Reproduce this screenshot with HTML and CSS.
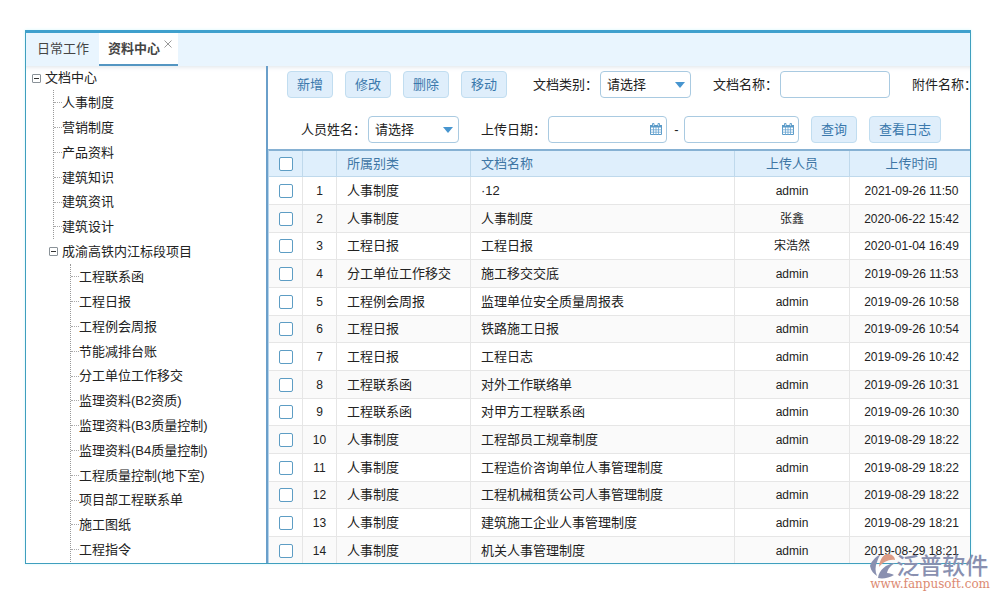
FILE: index.html
```html
<!DOCTYPE html>
<html lang="zh-CN">
<head>
<meta charset="utf-8">
<title>资料中心</title>
<link rel="stylesheet" href="styles.css">
</head>
<body>
<svg class="defs" aria-hidden="true">
  <symbol id="calendar" viewBox="0 0 12 12">
    <path d="M.5 2.5h11v9H.5z" fill="#fff" stroke="#5b9bc8"/>
    <path d="M0 2h12v2.500H0z" fill="#5b9bc8"/>
    <path d="M3.5 4v8M6 4v8M8.500 4v8M0 6.800h12M0 9.200h12" stroke="#6ba6d2" fill="none" stroke-width=".8"/>
    <path d="M2.500 3V.5h1.500V3M8 3V.5h1.500V3" stroke="#5b9bc8" fill="#fff" stroke-width=".9"/>
  </symbol>
</svg>
<main class="panel">
  <nav class="tabs">
    <a class="tab" href="#daily">日常工作</a>
    <div class="tab tab-active"><a href="#docs">资料中心</a><button class="close" type="button" aria-label="关闭"><svg viewBox="0 0 8 8"><path d="M.5.5l7 7M7.5.5l-7 7"/></svg></button></div>
  </nav>
  <div class="body">
    <aside class="sidebar">
      <div class="node root"><button class="toggle" type="button" aria-label="折叠"></button><a href="#n">文档中心</a></div>
      <ul class="tree">
        <li class="node"><a href="#n">人事制度</a></li>
        <li class="node"><a href="#n">营销制度</a></li>
        <li class="node"><a href="#n">产品资料</a></li>
        <li class="node"><a href="#n">建筑知识</a></li>
        <li class="node"><a href="#n">建筑资讯</a></li>
        <li class="node"><a href="#n">建筑设计</a></li>
      </ul>
      <div class="node branch"><button class="toggle" type="button" aria-label="折叠"></button><a href="#n">成渝高铁内江标段项目</a></div>
      <ul class="tree tree-inner">
        <li class="node"><a href="#n">工程联系函</a></li>
        <li class="node"><a href="#n">工程日报</a></li>
        <li class="node"><a href="#n">工程例会周报</a></li>
        <li class="node"><a href="#n">节能减排台账</a></li>
        <li class="node"><a href="#n">分工单位工作移交</a></li>
        <li class="node"><a href="#n">监理资料(B2资质)</a></li>
        <li class="node"><a href="#n">监理资料(B3质量控制)</a></li>
        <li class="node"><a href="#n">监理资料(B4质量控制)</a></li>
        <li class="node"><a href="#n">工程质量控制(地下室)</a></li>
        <li class="node"><a href="#n">项目部工程联系单</a></li>
        <li class="node"><a href="#n">施工图纸</a></li>
        <li class="node"><a href="#n">工程指令</a></li>
      </ul>
    </aside>
    <section class="content">
      <form class="filters">
        <div class="line">
          <div class="actions">
            <button class="btn" type="button">新增</button>
            <button class="btn" type="button">修改</button>
            <button class="btn" type="button">删除</button>
            <button class="btn" type="button">移动</button>
          </div>
          <div class="field"><label for="type">文档类别：</label><span class="pick"><select id="type"><option>请选择</option></select></span></div>
          <div class="field"><label for="name">文档名称：</label><input class="box" id="name" type="text"></div>
          <div class="field"><label for="file">附件名称：</label><input class="box" id="file" type="text"></div>
        </div>
        <div class="line line-second">
          <div class="field"><label for="person">人员姓名：</label><span class="pick"><select id="person"><option>请选择</option></select></span></div>
          <div class="field"><label for="from">上传日期：</label><span class="date"><input class="box" id="from" type="text"><svg><use href="#calendar"/></svg></span><span class="dash">-</span><span class="date"><input class="box" type="text" aria-label="结束日期"><svg><use href="#calendar"/></svg></span></div>
          <div class="actions search"><button class="btn" type="button">查询</button><button class="btn" type="button">查看日志</button></div>
        </div>
      </form>
      <table class="grid">
        <colgroup><col class="c-check"><col class="c-num"><col class="c-cat"><col class="c-name"><col class="c-user"><col class="c-time"></colgroup>
        <thead><tr><th><input type="checkbox" aria-label="全选"></th><th></th><th class="left">所属别类</th><th class="left">文档名称</th><th>上传人员</th><th>上传时间</th></tr></thead>
        <tbody>
          <tr><td><input type="checkbox" aria-label="选择 1"></td><td class="num">1</td><td class="left">人事制度</td><td class="left">·12</td><td class="user">admin</td><td class="num">2021-09-26 11:50</td></tr>
          <tr><td><input type="checkbox" aria-label="选择 2"></td><td class="num">2</td><td class="left">人事制度</td><td class="left">人事制度</td><td class="user">张鑫</td><td class="num">2020-06-22 15:42</td></tr>
          <tr><td><input type="checkbox" aria-label="选择 3"></td><td class="num">3</td><td class="left">工程日报</td><td class="left">工程日报</td><td class="user">宋浩然</td><td class="num">2020-01-04 16:49</td></tr>
          <tr><td><input type="checkbox" aria-label="选择 4"></td><td class="num">4</td><td class="left">分工单位工作移交</td><td class="left">施工移交交底</td><td class="user">admin</td><td class="num">2019-09-26 11:53</td></tr>
          <tr><td><input type="checkbox" aria-label="选择 5"></td><td class="num">5</td><td class="left">工程例会周报</td><td class="left">监理单位安全质量周报表</td><td class="user">admin</td><td class="num">2019-09-26 10:58</td></tr>
          <tr><td><input type="checkbox" aria-label="选择 6"></td><td class="num">6</td><td class="left">工程日报</td><td class="left">铁路施工日报</td><td class="user">admin</td><td class="num">2019-09-26 10:54</td></tr>
          <tr><td><input type="checkbox" aria-label="选择 7"></td><td class="num">7</td><td class="left">工程日报</td><td class="left">工程日志</td><td class="user">admin</td><td class="num">2019-09-26 10:42</td></tr>
          <tr><td><input type="checkbox" aria-label="选择 8"></td><td class="num">8</td><td class="left">工程联系函</td><td class="left">对外工作联络单</td><td class="user">admin</td><td class="num">2019-09-26 10:31</td></tr>
          <tr><td><input type="checkbox" aria-label="选择 9"></td><td class="num">9</td><td class="left">工程联系函</td><td class="left">对甲方工程联系函</td><td class="user">admin</td><td class="num">2019-09-26 10:30</td></tr>
          <tr><td><input type="checkbox" aria-label="选择 10"></td><td class="num">10</td><td class="left">人事制度</td><td class="left">工程部员工规章制度</td><td class="user">admin</td><td class="num">2019-08-29 18:22</td></tr>
          <tr><td><input type="checkbox" aria-label="选择 11"></td><td class="num">11</td><td class="left">人事制度</td><td class="left">工程造价咨询单位人事管理制度</td><td class="user">admin</td><td class="num">2019-08-29 18:22</td></tr>
          <tr><td><input type="checkbox" aria-label="选择 12"></td><td class="num">12</td><td class="left">人事制度</td><td class="left">工程机械租赁公司人事管理制度</td><td class="user">admin</td><td class="num">2019-08-29 18:22</td></tr>
          <tr><td><input type="checkbox" aria-label="选择 13"></td><td class="num">13</td><td class="left">人事制度</td><td class="left">建筑施工企业人事管理制度</td><td class="user">admin</td><td class="num">2019-08-29 18:21</td></tr>
          <tr><td><input type="checkbox" aria-label="选择 14"></td><td class="num">14</td><td class="left">人事制度</td><td class="left">机关人事管理制度</td><td class="user">admin</td><td class="num">2019-08-29 18:21</td></tr>
        </tbody>
      </table>
    </section>
  </div>
</main>
<div class="brand">
  <div class="brand-top">
    <svg class="logo" viewBox="0 0 26 26" aria-hidden="true">
      <path d="M11 1C5 4 1 9 0 13c1 5 4 8 7 10C5 18 5 14 7 9c1-3 2-6 4-8z" fill="#8990b0"/>
      <path d="M9 14C10 5 14 1 18 1c4 0 7 3 7 6-6-1-12 2-16 7z" fill="#dd9c86"/>
      <path d="M8 25c1-8 8-14 17-15-5 3-7 6-8 10 3 0 5 1 7 2-5 3-11 4-16 3z" fill="#8990b0"/>
    </svg>
    <span>泛普软件</span>
  </div>
  <div class="brand-url">www.fanpusoft.com</div>
</div>
</body>
</html>
```
FILE: styles.css
```css
* { box-sizing: border-box; }
body {
  margin: 0;
  height: 100vh;
  padding: 30px 29px 36px 25px;
  display: flex;
  flex-direction: column;
  background: #fff;
  color: #222;
  font: 13px/16px "Liberation Sans", "Noto Sans CJK SC", sans-serif;
}
a { color: inherit; text-decoration: none; }
button, input, select { font: inherit; color: inherit; margin: 0; }
.defs { position: absolute; width: 0; height: 0; }

.panel {
  flex: 1;
  min-height: 0;
  display: flex;
  flex-direction: column;
  overflow: hidden;
  border: 1px solid #3f9fbe;
  border-top: 3px solid #3fa0cd;
  box-shadow: 0 0 3px #d4f7fb;
}
.tabs { flex: none; display: flex; height: 33px; background: #e9f5fe; }
.tab { display: flex; align-items: center; padding: 0 10px 2px 11px; color: #444; }
.tab-active { background: #fff; border-bottom: 2px solid #5496c2; padding: 0 6px 0 9px; font-weight: bold; }
.close { align-self: flex-start; width: 8px; height: 8px; margin: 7px 0 0 4px; padding: 0; border: 0; background: none; display: block; }
.close svg { display: block; width: 8px; height: 8px; stroke: #999; fill: none; }

.body { flex: 1; min-height: 0; display: flex; box-shadow: inset 0 5px 5px -4px #dde3e8; }
.sidebar { flex: none; width: 242px; overflow: hidden; border-right: 2px solid #6a9fca; }
.node { display: flex; align-items: center; height: 25px; white-space: nowrap; }
.root { padding-left: 6px; height: 24px; }
.branch { padding-left: 23px; }
.tree { list-style: none; margin: 0 0 0 27px; padding: 0; border-left: 1px dotted #999; }
.tree-inner { margin-left: 44px; }
.tree .node:nth-child(5n) { height: 24px; }
.tree .node::before { content: ""; width: 8px; border-top: 1px dotted #aaa; }
.toggle {
  width: 9px; height: 9px; padding: 0; margin-right: 4px;
  border: 1px solid #8a9298; border-radius: 1px;
  background: linear-gradient(#333, #333) center / 5px 1px no-repeat #fff;
}

.content { flex: 1; min-width: 0; overflow: hidden; }
.filters { padding: 5px 0 6px 19px; }
.line { display: flex; align-items: center; height: 27px; gap: 22px; }
.line-second { margin-top: 18px; padding-left: 14px; }
.actions { display: flex; gap: 12px; margin-right: 4px; }
.search { margin-left: -10px; }
.btn {
  height: 27px; min-width: 46px; padding: 0 9px;
  border: 1px solid #c1ddf0; border-radius: 4px;
  background: #dfeefb; color: #3a78ac; white-space: nowrap;
}
.field { flex: none; display: flex; align-items: center; }
.field label { width: 67px; white-space: nowrap; font-size: 13px; }
.box { width: 110px; height: 27px; border: 1px solid #a9cae1; border-radius: 4px; background: #fff; }
.pick { position: relative; display: flex; }
.pick select { width: 91px; height: 27px; padding: 0 6px; appearance: none; border: 1px solid #a9cae1; border-radius: 4px; background: #fff; }
.pick::after {
  content: ""; position: absolute; right: 6px; top: 11px;
  border: 5px solid transparent; border-top: 6px solid #4795cf; border-bottom: 0;
  pointer-events: none;
}
.date { position: relative; }
.date .box { display: block; width: 119px; }
.dash + .date .box { width: 115px; }
.date svg { position: absolute; right: 5px; top: 7px; width: 12px; height: 12px; pointer-events: none; }
.dash { width: 17px; padding-left: 2px; text-align: center; }

.grid { width: 100%; table-layout: fixed; border-collapse: separate; border-spacing: 0; border-top: 2px solid #86b1d3; border-left: 1px solid #b5d3ea; }
.c-check { width: 34px; }
.c-num { width: 34px; }
.c-cat { width: 134px; }
.c-user { width: 115px; }
.c-time { width: 120px; }
.grid th, .grid td { padding: 0; height: 28px; border-right: 1px solid #e6e6e6; border-bottom: 1px solid #e6e6e6; text-align: center; white-space: nowrap; }
.grid th { height: 26px; background: #dfeffc; color: #3e76a5; font-weight: normal; border-color: #bfd9ec; }
.grid th:last-child, .grid td:last-child { border-right: 0; padding-left: 3px; }
.grid .left { text-align: left; padding-left: 10px; }
.grid tbody tr:nth-child(even) { background: #fafafa; }
.grid tbody tr:nth-child(3n) td { height: 27px; }
.num, .user { font-size: 12px; }
.grid input {
  display: block; width: 14px; height: 14px; margin: 0 auto;
  appearance: none; border: 1px solid #5d9dc4; border-radius: 2px; background: #fff;
}

.brand { position: absolute; right: 10px; bottom: 10px; color: #8990b0; }
.brand-top { display: flex; align-items: center; height: 24px; font-size: 23px; line-height: 24px; font-weight: 500; }
.logo { width: 26px; height: 26px; }
.brand-url { font: 12px/12px "DejaVu Serif", serif; color: #dc8a72; }
```
